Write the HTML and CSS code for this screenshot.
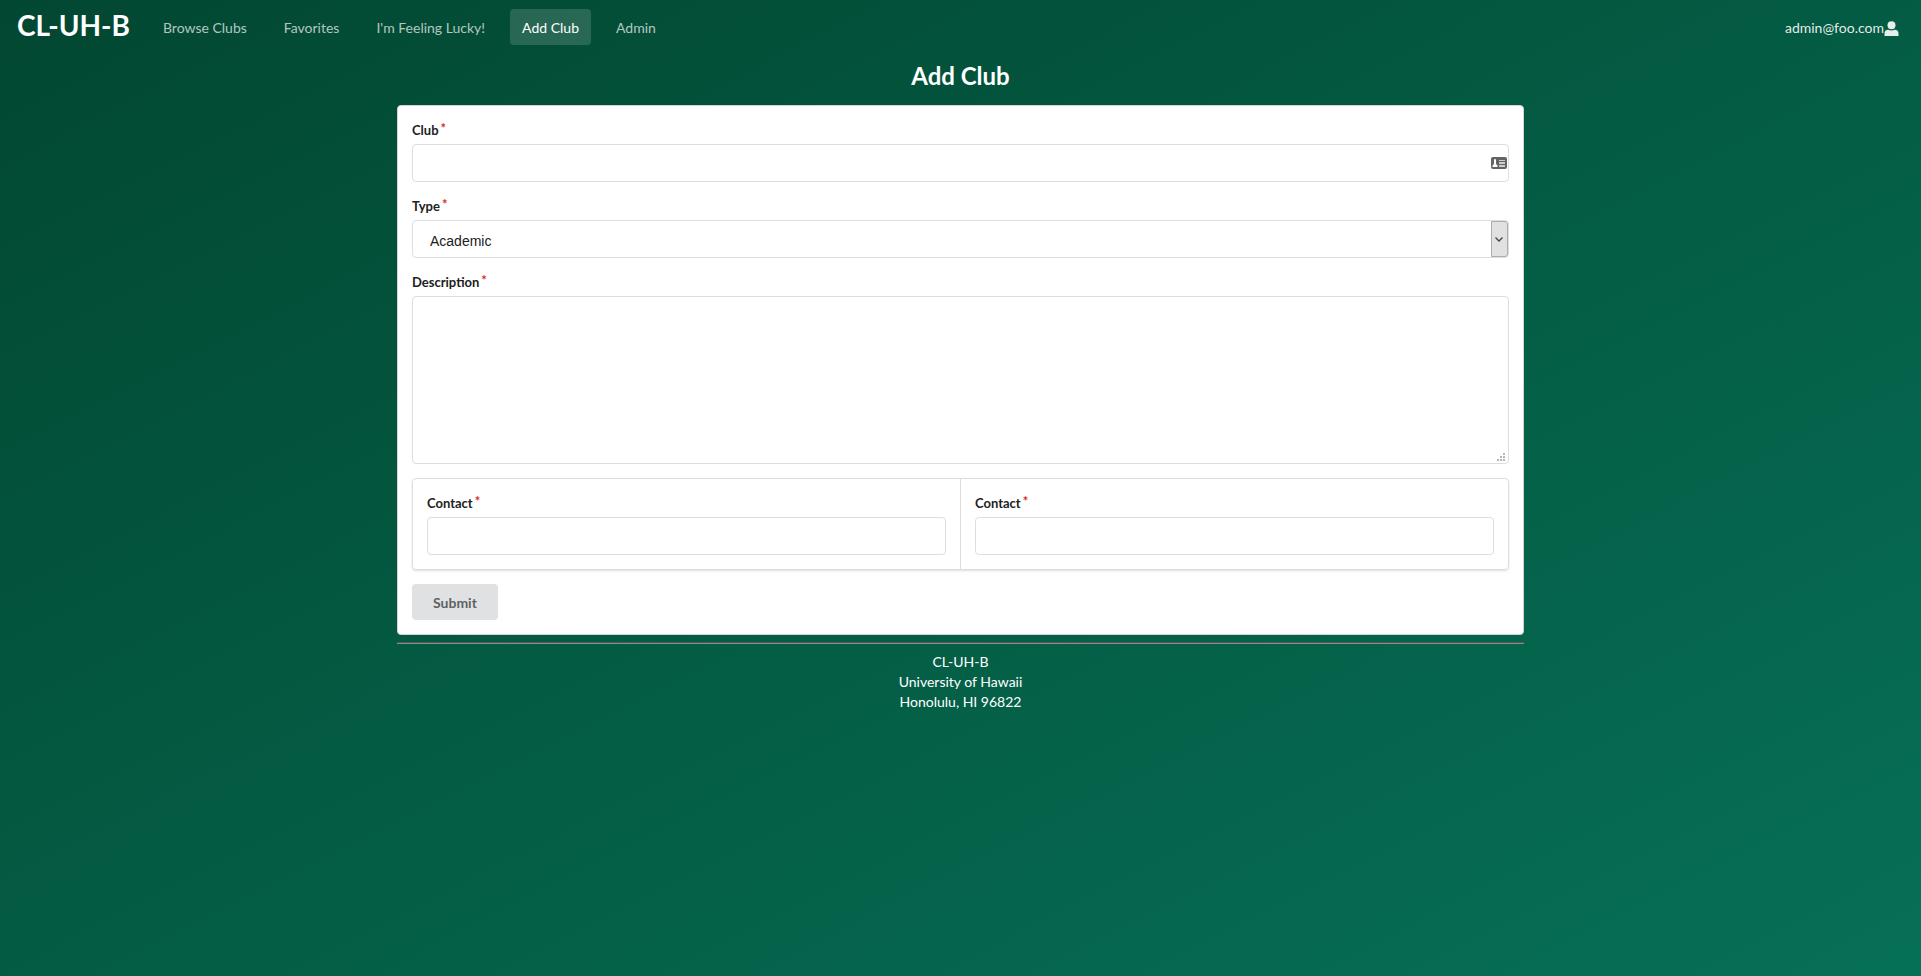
FILE: index.html
```html
<!DOCTYPE html>
<html lang="en">
<head>
<meta charset="utf-8">
<title>CL-UH-B</title>
<link rel="stylesheet" href="styles.css">
</head>
<body class="page">
<nav class="menu">
  <a class="brand" href="#">CL-UH-B</a>
  <a class="item" href="#">Browse Clubs</a>
  <a class="item" href="#">Favorites</a>
  <a class="item" href="#">I'm Feeling Lucky!</a>
  <a class="item active" href="#">Add Club</a>
  <a class="item" href="#">Admin</a>
  <button class="user" type="button">admin@foo.com<svg class="user-icon" viewBox="0 0 15 15" aria-hidden="true"><circle cx="7.5" cy="4.2" r="4"/><path d="M.5 15v-2.4Q.5 9 4.2 8.800q3.300 1.500 6.600 0Q14.500 9 14.500 12.600V15z"/></svg></button>
</nav>
<main class="container">
  <h2 class="title">Add Club</h2>
  <form class="card">
    <div class="field">
      <label class="label" for="club">Club</label>
      <div class="input-wrap">
        <input class="control" id="club" type="text">
        <svg class="card-icon" viewBox="0 0 16 12" aria-hidden="true"><rect width="16" height="12" rx="2" fill="#646464"/><path fill="#fff" d="M1.500 10V8.500L3 7V3q0-1 1-1t1 1v4l1.500 1.500V10z"/><path fill="#ccc" d="M8 3h6v1H8zM8 5h6v2H8zM8 8h6v2H8z"/></svg>
      </div>
    </div>
    <div class="field">
      <label class="label" for="type">Type</label>
      <div class="input-wrap">
        <select class="control select" id="type"><option>Academic</option></select>
        <span class="arrow"><svg width="8" height="5" viewBox="0 0 8 5" aria-hidden="true"><path d="M.5.5 4 4 7.500.5" fill="none" stroke="#444" stroke-width="1.300"/></svg></span>
      </div>
    </div>
    <div class="field">
      <label class="label" for="description">Description</label>
      <div class="input-wrap">
        <textarea class="control area" id="description"></textarea>
        <svg class="grip" viewBox="0 0 8 8" aria-hidden="true"><path fill="#b4b4b4" d="M6 0h2v2H6zM3 3h2v2H3zM6 3h2v2H6zM0 6h2v2H0zM3 6h2v2H3zM6 6h2v2H6z"/></svg>
      </div>
    </div>
    <div class="group">
      <div class="segment">
        <label class="label" for="contact-name">Contact</label>
        <input class="control" id="contact-name" type="text">
      </div>
      <div class="segment">
        <label class="label" for="contact-email">Contact</label>
        <input class="control" id="contact-email" type="text">
      </div>
    </div>
    <button class="submit" type="submit">Submit</button>
  </form>
  <footer class="footer">
    <hr class="rule">
    CL-UH-B<br>University of Hawaii<br>Honolulu, HI 96822
  </footer>
</main>
</body>
</html>
```
FILE: styles.css
```css
*, *::before, *::after { box-sizing: border-box; }
.page {
  margin: 0;
  min-height: 100vh;
  background: linear-gradient(to bottom right, #024731, #067056);
  font: 14px/20px Lato, "Liberation Sans", sans-serif;
  color: #fff;
}
.menu {
  display: flex;
  align-items: center;
  height: 54px;
  padding: 0 22px 0 17px;
}
.brand {
  margin-right: 21px;
  font-size: 28px;
  font-weight: 700;
  line-height: 36px;
  padding-bottom: 4px;
  color: #fff;
  text-decoration: none;
}
.item {
  margin-right: 13px;
  padding: 9px 12px 7px;
  border-radius: 4px;
  color: rgba(255, 255, 255, .7);
  text-decoration: none;
}
.item.active { background: rgba(255, 255, 255, .15); color: #fff; }
.user {
  display: flex;
  align-items: center;
  margin-left: auto;
  padding: 2px 0 0;
  border: 0;
  background: none;
  font: inherit;
  color: rgba(255, 255, 255, .9);
}
.user-icon { width: 15px; height: 15px; fill: currentColor; }
.container { max-width: 1127px; margin: 0 auto; }
.title {
  margin: 0 0 14px;
  padding-top: 6px;
  font-size: 24px;
  line-height: 31px;
  text-align: center;
}
.card {
  padding: 14px;
  border: 1px solid #d4d4d5;
  border-radius: 4px;
  background: #fff;
  color: #212122;
}
.field { margin-bottom: 14px; }
.label {
  display: block;
  margin-bottom: 4px;
  font-size: 13px;
  font-weight: 700;
}
.label::after {
  content: "*";
  margin-left: 2px;
  color: #db2828;
  vertical-align: top;
  line-height: 17px;
}
.input-wrap { position: relative; }
.control {
  display: block;
  width: 100%;
  height: 38px;
  padding: 0 14px;
  border: 1px solid #dedede;
  border-radius: 4px;
  background: #fff;
  color: #212122;
  font: 14px/20px Lato, sans-serif;
}
.select {
  appearance: none;
  padding: 3px 17px 0;
  font-family: "Liberation Sans", Arial, sans-serif;
}
.area { height: 168px; resize: none; }
.card-icon { position: absolute; right: 2px; top: 13px; width: 16px; height: 12px; }
.arrow {
  position: absolute;
  right: 1px;
  top: 1px;
  bottom: 1px;
  width: 17px;
  padding-right: 1px;
  display: flex;
  align-items: center;
  justify-content: center;
  border: 1px solid #adadad;
  border-radius: 0 3px 3px 0;
  background: #e1e1e1;
  pointer-events: none;
}
.grip { position: absolute; right: 4px; bottom: 3px; width: 8px; height: 8px; }
.group {
  display: flex;
  margin-bottom: 14px;
  border: 1px solid #dedede;
  border-radius: 4px;
  box-shadow: 0 1px 2px rgba(34, 36, 38, .15);
}
.segment { flex: 1; padding: 14px; }
.segment + .segment { border-left: 1px solid #dedede; }
.submit {
  display: block;
  height: 36px;
  padding: 2px 21px 0;
  border: 0;
  border-radius: 4px;
  background: #e0e1e2;
  color: #606162;
  font: 700 14px/20px Lato, sans-serif;
}
.footer { text-align: center; }
.rule {
  height: 2px;
  margin: 7px 0 8px;
  border: 0;
  border-top: 1px solid #555;
  border-bottom: 1px solid #8d8d8d;
}
```
